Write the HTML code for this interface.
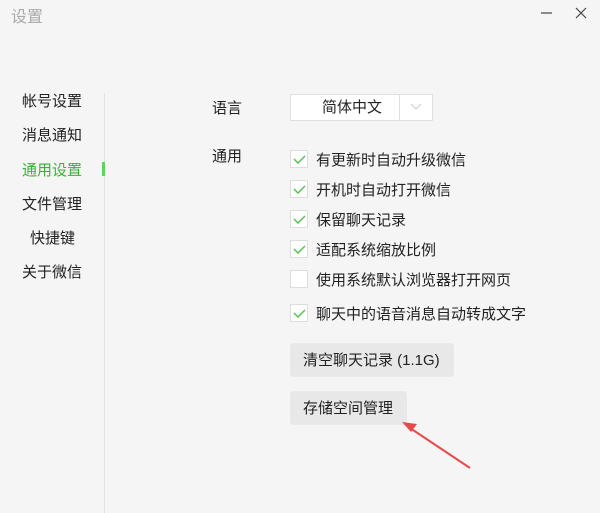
<!DOCTYPE html>
<html><head><meta charset="utf-8"><style>
body{margin:0;width:600px;height:513px;background:#f5f5f5;font-family:"Liberation Sans","Noto Sans CJK SC",sans-serif;position:relative;overflow:hidden;color:#222}
.a{position:absolute;white-space:nowrap;font-size:15px;line-height:20px}
.cb{position:absolute;left:290px;width:16px;height:16px;background:#fff;border:1px solid #ddd}
.btn{position:absolute;left:290px;background:#e8e8e8;border-radius:4px;font-size:15px;line-height:36px;padding-left:13px;height:34px}
</style></head><body>
<div class="a" style="left:11px;top:8px;color:#aaa;font-size:16px">设置</div>
<svg style="position:absolute;left:538px;top:5px" width="50" height="16"><path d="M3 8h11" stroke="#444" stroke-width="1.2"/><path d="M38 3l10 10M48 3L38 13" stroke="#444" stroke-width="1.2"/></svg>
<div class="a" style="left:22px;top:92px">帐号设置</div>
<div class="a" style="left:22px;top:126px">消息通知</div>
<div class="a" style="left:22px;top:161px;color:#3cb035">通用设置</div>
<div class="a" style="left:22px;top:195px">文件管理</div>
<div class="a" style="left:30px;top:229px">快捷键</div>
<div class="a" style="left:22px;top:263px">关于微信</div>
<div style="position:absolute;left:104px;top:93px;width:1px;height:420px;background:#e2e2e2"></div>
<div style="position:absolute;left:102px;top:162px;width:3px;height:14px;background:#5fd35a"></div>
<div class="a" style="left:212px;top:99px">语言</div>
<div style="position:absolute;left:290px;top:94px;width:141px;height:25px;background:#fff;border:1px solid #e0e0e0"></div>
<div style="position:absolute;left:399px;top:95px;width:1px;height:25px;background:#e0e0e0"></div>
<div class="a" style="left:322px;top:98px">简体中文</div>
<svg style="position:absolute;left:409px;top:101px" width="14" height="10"><path d="M2 3l5 5 5-5" stroke="#ccc" fill="none"/></svg>
<div class="a" style="left:212px;top:147px">通用</div>
<div class="cb" style="top:150px"></div><div class="a" style="left:316px;top:151px">有更新时自动升级微信</div>
<div class="cb" style="top:180px"></div><div class="a" style="left:316px;top:181px">开机时自动打开微信</div>
<div class="cb" style="top:210px"></div><div class="a" style="left:316px;top:211px">保留聊天记录</div>
<div class="cb" style="top:240px"></div><div class="a" style="left:316px;top:241px">适配系统缩放比例</div>
<div class="cb" style="top:270px"></div><div class="a" style="left:316px;top:271px">使用系统默认浏览器打开网页</div>
<div class="cb" style="top:304px"></div><div class="a" style="left:316px;top:305px">聊天中的语音消息自动转成文字</div>
<svg style="position:absolute;left:290px;top:150px" width="18" height="172" fill="none" stroke="#4fc04a" stroke-width="1.4">
<path d="M4 9l4 4 7-7"/><path d="M4 39l4 4 7-7"/><path d="M4 69l4 4 7-7"/><path d="M4 99l4 4 7-7"/><path d="M4 163l4 4 7-7"/></svg>
<div class="btn" style="top:343px;width:151px">清空聊天记录 (1.1G)</div>
<div class="btn" style="top:391px;width:104px">存储空间管理</div>
<svg style="position:absolute;left:0;top:0" width="600" height="513"><path d="M470 468L410 428" stroke="#e84a4a" stroke-width="2"/><path d="M402 422l15 2-6 8z" fill="#e84a4a"/></svg>
</body></html>
